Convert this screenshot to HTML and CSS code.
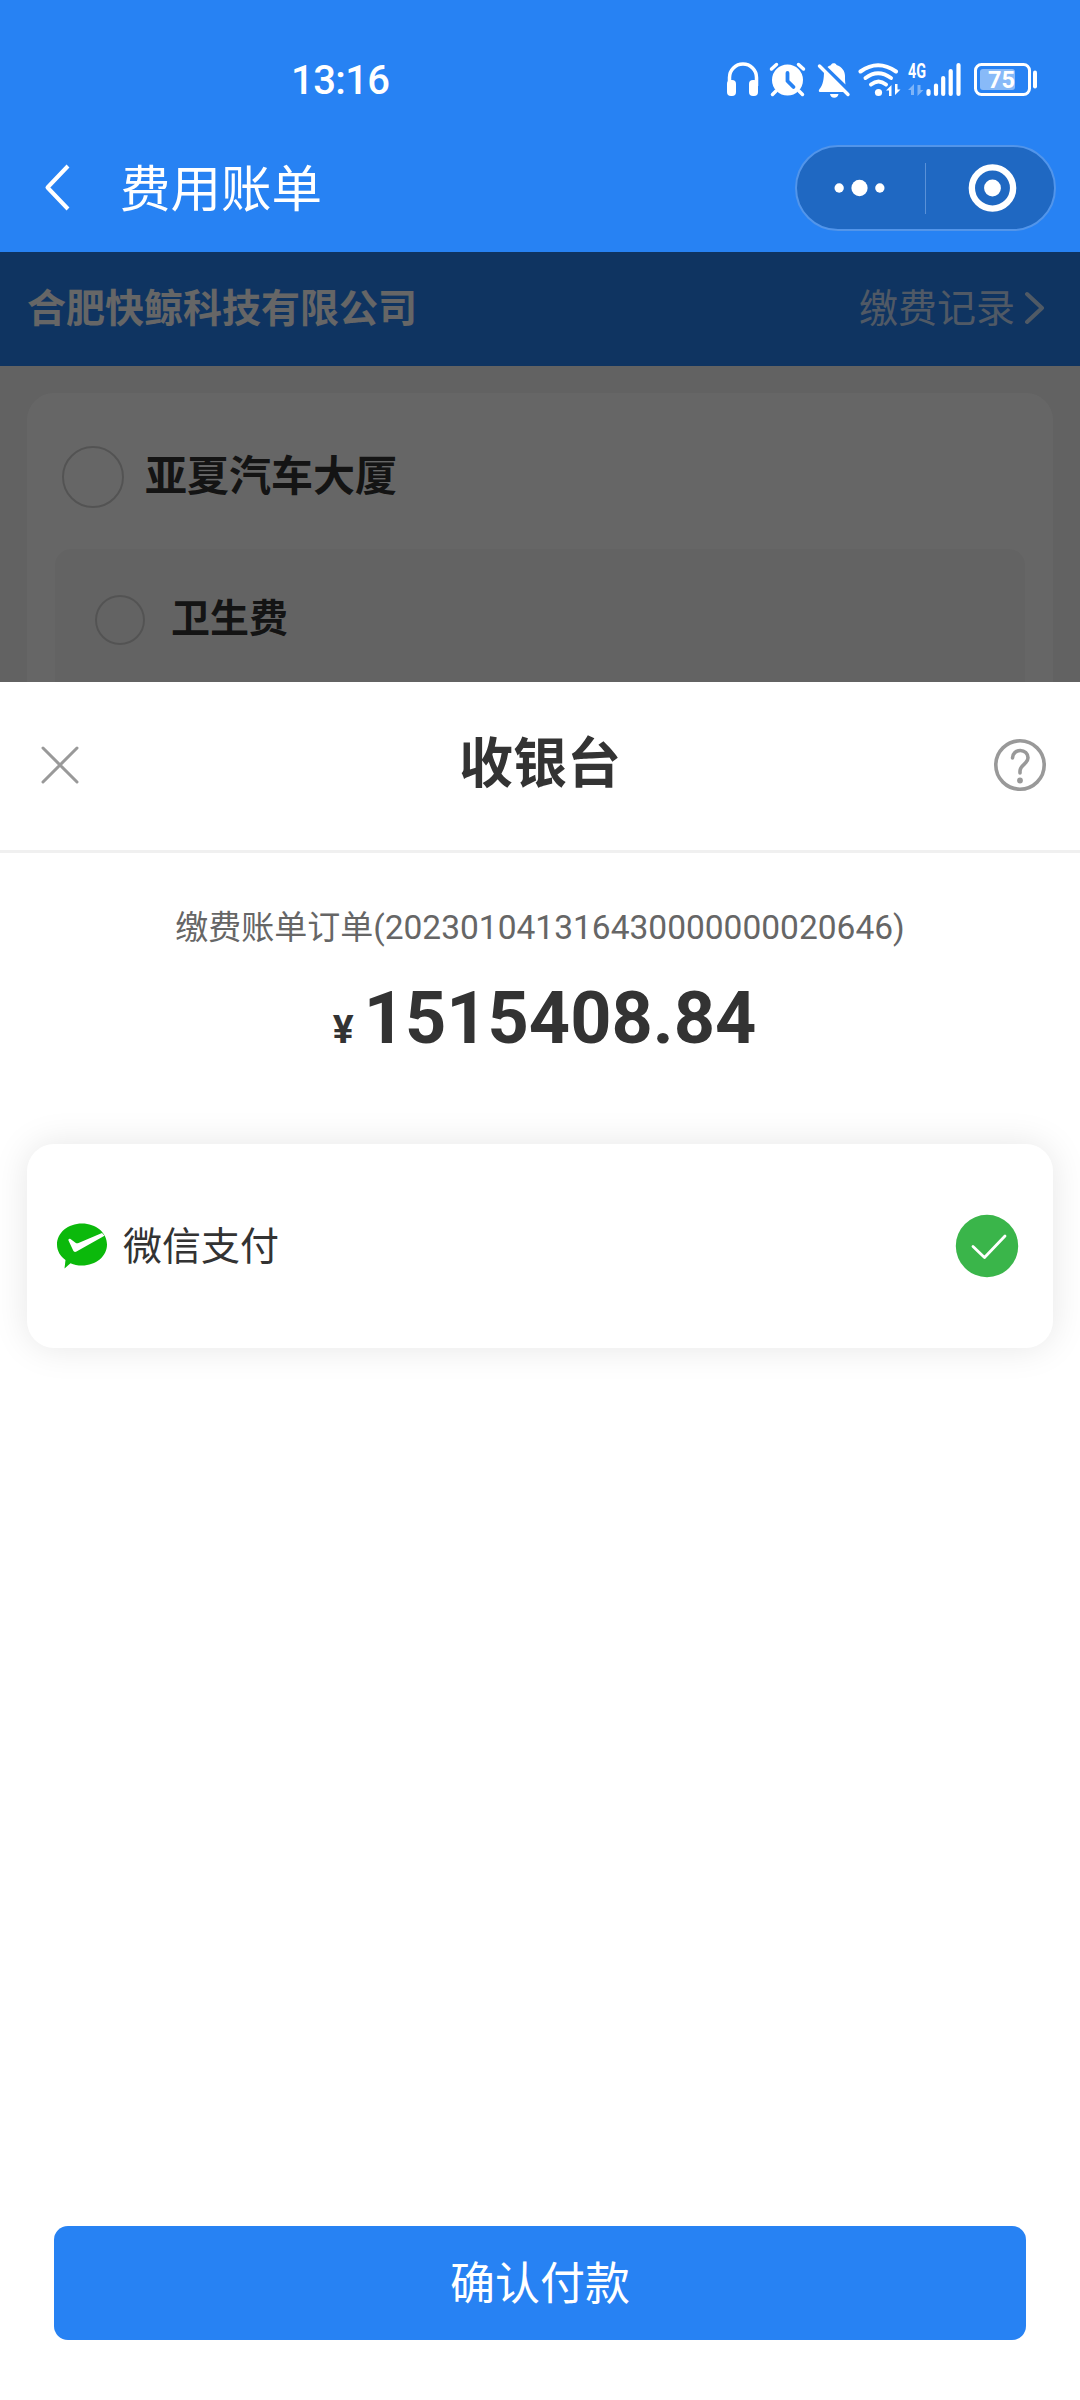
FILE: index.html
```html
<!DOCTYPE html>
<html lang="zh-CN">
<head>
    <meta charset="UTF-8">
    <meta name="viewport" content="width=device-width, initial-scale=1.0">
    <title>费用账单</title>
    <link rel="stylesheet" href="styles.css">
</head>
<body>

    <header class="top">
        <div class="status-bar">
            <span class="time">13:16</span>
            <svg class="status-icons" width="316" height="40" viewBox="0 0 316 40">
                <!-- 耳机 -->
                <path d="M3.500 26V17.500a13.500 13.500 0 0 1 27 0V26" fill="none" stroke="#fff" stroke-width="3.500"/>
                <rect x="1" y="20" width="9" height="16" rx="4" fill="#fff"/>
                <rect x="23" y="20" width="9" height="16" rx="4" fill="#fff"/>
                <!-- 闹钟 -->
                <circle cx="61.500" cy="20" r="15.500" fill="#fff"/>
                <path d="M45.500 9l5-4.500M77.500 9l-5-4.500M50 31l-3.500 3.500M73 31l3.500 3.500" stroke="#fff" stroke-width="3.500" stroke-linecap="round"/>
                <path d="M61.500 13v8l6 6" fill="none" stroke="#2782f3" stroke-width="3.800" stroke-linecap="round" stroke-linejoin="round"/>
                <!-- 静音 -->
                <path d="M98 11L118 32H94c-1.500 0-1.500-1.800-.5-3 3.500-4 4.500-10 4.500-18zM101.500 7c1.500-1 2.500-1.500 3.500-2 .5-2.500 5-2.500 5.500 0 5.500 2 8.500 6 8.500 11 0 3 0 5.500.5 8.500z" fill="#fff"/>
                <path d="M104 34h8.500a4.300 4.300 0 0 1-8.500 0z" fill="#fff"/>
                <path d="M93.500 6L122 34.500" stroke="#fff" stroke-width="3.400" stroke-linecap="round"/>
                <!-- WiFi -->
                <g fill="none" stroke="#fff" stroke-width="4" stroke-linecap="round">
                    <path d="M134.500 11.500q17.500-12.500 35.500 0"/>
                    <path d="M139.500 18q12.500-9.500 25.500 0"/>
                    <path d="M145 24.500q7.500-6 15 0"/>
                </g>
                <circle cx="152.500" cy="32.500" r="3.600" fill="#fff"/>
                <path d="M160 30.500l5.500-5.500v11h-2.500v-5.500zM174.500 29.500l-5.500 5.500v-11h2.500v5.500z" fill="#fff"/>
                <!-- 4G 信号 -->
                <text x="182" y="18" class="net" textLength="18" lengthAdjust="spacingAndGlyphs">4G</text>
                <path d="M182 30l6-6v11h-3v-5zM197.500 30l-6 6v-11h3v5z" fill="#fff" opacity=".4"/>
                <path d="M202.500 31v3M210 25.500v8.500M217.200 18v16M224.700 11v23M232.500 5v29" stroke="#fff" stroke-width="4.200" stroke-linecap="round"/>
                <!-- 电量 -->
                <rect x="249.500" y="4.500" width="54" height="30" rx="6" fill="none" stroke="#fff" stroke-width="3"/>
                <rect x="254" y="9" width="35" height="21" rx="3" fill="#fff" opacity=".45"/>
                <rect x="307" y="10.500" width="4" height="18" rx="2" fill="#fff"/>
                <text x="262" y="28" class="battery" textLength="27" lengthAdjust="spacingAndGlyphs">75</text>
            </svg>
        </div>
        <div class="nav-bar">
            <svg class="back" width="30" height="50" viewBox="0 0 30 50">
                <path d="M25 3L4.500 24.500L25 46" fill="none" stroke="#fff" stroke-width="4" stroke-linejoin="round"/>
            </svg>
            <h1 class="page-title">费用账单</h1>
            <div class="capsule">
                <svg class="capsule-icon" width="129" height="50" viewBox="0 0 129 50">
                    <circle cx="42.500" cy="25" r="4.700" fill="#fff"/>
                    <circle cx="63" cy="25" r="8.200" fill="#fff"/>
                    <circle cx="83.500" cy="25" r="4.700" fill="#fff"/>
                </svg>
                <span class="capsule-line"></span>
                <svg class="capsule-icon" width="129" height="50" viewBox="0 0 129 50">
                    <circle cx="67" cy="25" r="20.800" fill="none" stroke="#fff" stroke-width="6.400"/>
                    <circle cx="67" cy="25" r="8.500" fill="#fff"/>
                </svg>
            </div>
        </div>
    </header>

    <main class="bill">
        <div class="company-bar">
            <span class="company">合肥快鲸科技有限公司</span>
            <a class="record">缴费记录
                <svg class="arrow" width="20" height="34" viewBox="0 0 20 34">
                    <path d="M2 3L17 17L2 31" fill="none" stroke="currentColor" stroke-width="4" stroke-linecap="round" stroke-linejoin="round"/>
                </svg>
            </a>
        </div>
        <div class="bill-card">
            <div class="building">
                <span class="radio"></span>
                <span class="building-name">亚夏汽车大厦</span>
            </div>
            <div class="fee-list">
                <div class="fee">
                    <span class="radio radio-small"></span>
                    <span class="fee-name">卫生费</span>
                </div>
            </div>
        </div>
        <div class="mask"></div>
    </main>

    <!-- 收银台弹层 -->
    <section class="cashier">
        <div class="cashier-head">
            <svg width="40" height="40" viewBox="0 0 40 40">
                <path d="M3 3L37 37M37 3L3 37" stroke="#999" stroke-width="3" stroke-linecap="round"/>
            </svg>
            <h2 class="cashier-title">收银台</h2>
            <svg width="54" height="54" viewBox="0 0 54 54">
                <circle cx="27" cy="27" r="24.200" fill="none" stroke="#999" stroke-width="3.600"/>
                <path d="M19.500 20c0-4.500 3.500-7.500 7.800-7.500s7.700 3 7.700 7.300c0 6-8 7-8 13.200v2" fill="none" stroke="#999" stroke-width="3.600" stroke-linecap="round"/>
                <circle cx="27" cy="42.500" r="2.900" fill="#999"/>
            </svg>
        </div>

        <p class="order">缴费账单订单<span class="order-no">(202301041316430000000020646)</span></p>
        <p class="amount"><span class="yen">¥</span>1515408.84</p>

        <div class="pay-card">
            <svg width="52" height="48" viewBox="0 0 52 48">
                <path d="M26 1.500c14 0 25 9.300 25 21s-11 21-25 21c-4.500 0-8-.8-11.500-2.300L8.500 46.500l1-8.500C4.500 34.500 1 29 1 22.500 1 10.800 12 1.500 26 1.500z" fill="#0bb90b"/>
                <path d="M12.500 18.500c-.5-1.200.8-2.500 2-1.500l5 3.800c1 .7 2 .6 3 .2L46 11l2.500 2.800L20.500 29.500c-1.500.8-2.800.3-3.300-.9z" fill="#fff"/>
            </svg>
            <span class="pay-name">微信支付</span>
            <svg class="checked" width="64" height="64" viewBox="0 0 64 64">
                <circle cx="32" cy="32" r="31.200" fill="#3ab54a"/>
                <path d="M18 32.500L29.500 43.500L50 22" fill="none" stroke="#fff" stroke-width="2.800" stroke-linecap="round" stroke-linejoin="round"/>
            </svg>
        </div>

        <button class="confirm">确认付款</button>
    </section>

</body>
</html>
```
FILE: styles.css
```css
* {
    box-sizing: border-box;
}

body {
    margin: 0;
    height: 2400px;
    position: relative;
    overflow: hidden;
    font-family: "Noto Sans CJK SC", sans-serif;
    color: #333;
    background-color: #f5f5f5;
}

svg {
    display: block;
    flex-shrink: 0;
}

h1, h2, p {
    margin: 0;
}

/* --- 顶部状态栏和导航栏 --- */
.top {
    height: 252px;
    background-color: #2782f3;
    color: #fff;
}

.status-bar {
    display: flex;
    align-items: center;
    justify-content: space-between;
    height: 124px;
    padding: 36px 38px 0 291px;
}

.time {
    padding-top: 2px;
    font-family: Roboto, sans-serif;
    font-size: 40px;
    font-weight: 500;
    line-height: 48px;
    letter-spacing: -0.6px;
}

.net {
    font: 700 20px Roboto, sans-serif;
    fill: #fff;
}

.battery {
    font: 700 24px Roboto, sans-serif;
    fill: #fff;
}

.nav-bar {
    display: flex;
    align-items: center;
    height: 128px;
    padding: 0 24px 0 43px;
}

.page-title {
    margin: -6px 0 0 47px;
    font-size: 50.5px;
    font-weight: 400;
    line-height: 60px;
}

.capsule {
    display: flex;
    align-items: center;
    width: 261px;
    height: 86px;
    margin-left: auto;
    border: 2px solid #5295ea;
    border-radius: 43px;
    background-color: #1f68c2;
}

.capsule-icon {
    flex: 1;
}

.capsule-line {
    width: 1px;
    height: 51px;
    background-color: #5991d8;
}

/* --- 账单内容 --- */
.bill {
    position: relative;
    height: 2148px;
}

.company-bar {
    display: flex;
    align-items: center;
    justify-content: space-between;
    height: 114px;
    padding: 0 35px 8px 27px;
    background-color: #2782f3;
    color: #fff;
    font-size: 39px;
}

.company {
    font-weight: 700;
}

.record {
    display: flex;
    align-items: center;
    gap: 10px;
    color: rgba(255, 255, 255, 0.75);
}

.arrow {
    margin-top: 5px;
}

.bill-card {
    height: 900px;
    margin: 27px;
    padding: 0 28px;
    border-radius: 27px;
    background-color: #fff;
}

.building {
    display: flex;
    align-items: center;
    height: 156px;
    padding: 12px 0 0 7px;
}

.building-name {
    margin: -9px 0 0 21px;
    font-size: 42px;
    font-weight: 700;
}

.radio {
    width: 62px;
    height: 62px;
    border: 2px solid #d0d0d0;
    border-radius: 50%;
}

.radio-small {
    width: 50px;
    height: 50px;
}

.fee-list {
    height: 600px;
    padding: 38px 40px;
    border-radius: 16px;
    background-color: #f8f8f8;
}

.fee {
    display: flex;
    align-items: center;
    height: 66px;
}

.fee-name {
    margin: -11px 0 0 26px;
    font-size: 39px;
    font-weight: 700;
}

.mask {
    position: absolute;
    inset: 0;
    background-color: rgba(0, 0, 0, 0.6);
}

/* --- 收银台弹层 --- */
.cashier {
    position: absolute;
    left: 0;
    right: 0;
    bottom: 0;
    display: flex;
    flex-direction: column;
    height: 1718px;
    background-color: #fff;
}

.cashier-head {
    display: flex;
    align-items: center;
    justify-content: space-between;
    height: 171px;
    padding: 0 33px 2px 40px;
    border-bottom: 3px solid #f0f0f0;
}

.cashier-title {
    margin: -10px 0 0 7px;
    font-size: 54px;
    font-weight: 700;
    line-height: 64px;
}

.order {
    margin-top: 48px;
    text-align: center;
    font-size: 33px;
    line-height: 48px;
    color: #666;
}

.order-no {
    font-family: Roboto, sans-serif;
    font-size: 33.5px;
}

.amount {
    margin-top: 25px;
    padding-left: 9px;
    text-align: center;
    font-family: Roboto, sans-serif;
    font-size: 72px;
    font-weight: 700;
    line-height: 84px;
}

.yen {
    margin-right: 10px;
    font-size: 39px;
}

.pay-card {
    display: flex;
    align-items: center;
    height: 204px;
    margin: 72px 27px 0;
    padding: 0 34px 0 29px;
    border-radius: 27px;
    background-color: #fff;
    box-shadow: 0 0 36px rgba(0, 0, 0, 0.1);
}

.pay-name {
    margin: -7px 0 0 15px;
    font-size: 39px;
}

.checked {
    margin-left: auto;
}

.confirm {
    height: 114px;
    margin: auto 54px 60px;
    padding: 0 0 6px;
    border: none;
    border-radius: 14px;
    background-color: #2782f3;
    color: #fff;
    font-family: inherit;
    font-size: 45px;
}
```
